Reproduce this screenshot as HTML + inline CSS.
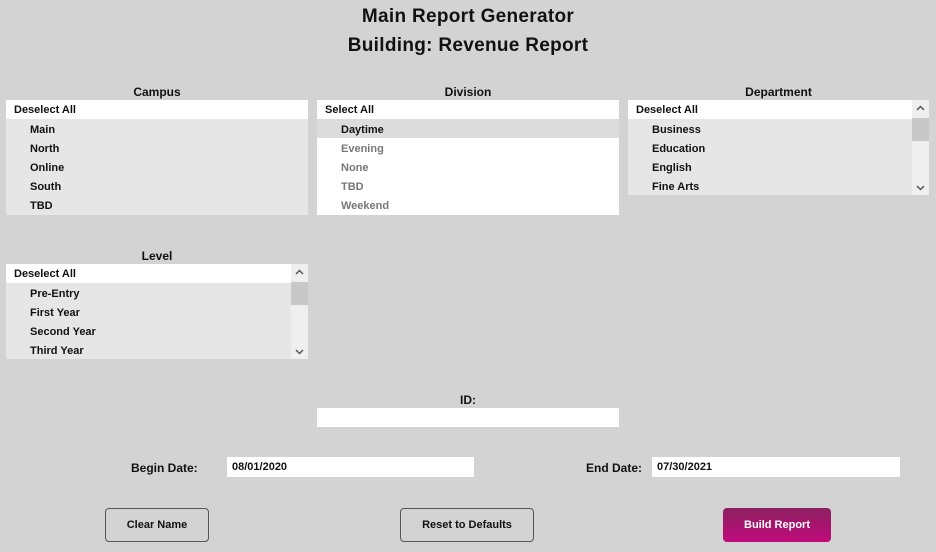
<!DOCTYPE html>
<html><head><style>
*{box-sizing:border-box;margin:0;padding:0}
body{width:936px;height:552px;background:#d3d3d3;font-family:"Liberation Sans",sans-serif;font-weight:bold;color:#111;position:relative;overflow:hidden;font-size:11px}
.a{position:absolute}
.t{position:absolute;left:0;width:936px;text-align:center;font-size:19px;letter-spacing:0.3px}
.lbl{position:absolute;text-align:center;font-size:12px}
.box{position:absolute;background:#e6e6e6}
.hd{height:19px;background:#fff;line-height:21px;padding-left:8px}
.r{height:19px;line-height:22px;padding-left:24px}
.g{color:#777}
.sel{background:#dcdcdc}
.sb{position:absolute;right:0;top:0;width:17px;height:100%;background:#efefef}
.th{position:absolute;left:0;width:17px;background:#c8c8c8}
.inp{position:absolute;background:#fff;height:20px;line-height:21px;padding-left:5px;font-weight:bold;font-size:11px}
.btn{position:absolute;border:1px solid #555;border-radius:4px;background:#d3d3d3;text-align:center;font-size:11px}
</style></head><body>
<div class="t" style="top:6px">Main Report Generator</div>
<div class="t" style="top:35px">Building: Revenue Report</div>

<div class="lbl" style="left:6px;width:302px;top:85px">Campus</div>
<div class="box" style="left:6px;top:100px;width:302px;height:115px">
<div class="hd">Deselect All</div><div class="r">Main</div><div class="r">North</div><div class="r">Online</div><div class="r">South</div><div class="r">TBD</div></div>

<div class="lbl" style="left:317px;width:302px;top:85px">Division</div>
<div class="box" style="left:317px;top:100px;width:302px;height:115px;background:#fff">
<div class="hd">Select All</div><div class="r sel">Daytime</div><div class="r g">Evening</div><div class="r g">None</div><div class="r g">TBD</div><div class="r g">Weekend</div></div>

<div class="lbl" style="left:628px;width:301px;top:85px">Department</div>
<div class="box" style="left:628px;top:100px;width:301px;height:95px;overflow:hidden">
<div class="hd">Deselect All</div><div class="r">Business</div><div class="r">Education</div><div class="r">English</div><div class="r">Fine Arts</div>
<div class="sb"><div class="th" style="top:18px;height:23px"></div>
<svg class="a" style="left:4px;top:5px" width="9" height="7"><path d="M1 5L4.5 1.5L8 5" stroke="#555" stroke-width="1.5" fill="none"/></svg>
<svg class="a" style="left:4px;top:84px" width="9" height="7"><path d="M1 2L4.5 5.5L8 2" stroke="#555" stroke-width="1.5" fill="none"/></svg></div></div>

<div class="lbl" style="left:6px;width:302px;top:249px">Level</div>
<div class="box" style="left:6px;top:264px;width:302px;height:95px;overflow:hidden">
<div class="hd">Deselect All</div><div class="r">Pre-Entry</div><div class="r">First Year</div><div class="r">Second Year</div><div class="r">Third Year</div>
<div class="sb"><div class="th" style="top:18px;height:23px"></div>
<svg class="a" style="left:4px;top:5px" width="9" height="7"><path d="M1 5L4.5 1.5L8 5" stroke="#555" stroke-width="1.5" fill="none"/></svg>
<svg class="a" style="left:4px;top:84px" width="9" height="7"><path d="M1 2L4.5 5.5L8 2" stroke="#555" stroke-width="1.5" fill="none"/></svg></div></div>

<div class="lbl" style="left:317px;width:302px;top:393px">ID:</div>
<div class="inp" style="left:317px;top:408px;width:302px;height:19px"></div>

<div class="a" style="left:131px;top:461px;font-size:12px">Begin Date:</div>
<div class="inp" style="left:227px;top:457px;width:247px">08/01/2020</div>
<div class="a" style="left:586px;top:461px;font-size:12px">End Date:</div>
<div class="inp" style="left:652px;top:457px;width:248px">07/30/2021</div>

<div class="btn" style="left:105px;top:508px;width:104px;height:34px;line-height:33px">Clear Name</div>
<div class="btn" style="left:400px;top:508px;width:134px;height:34px;line-height:33px">Reset to Defaults</div>
<div class="btn" style="left:723px;top:508px;width:108px;height:34px;line-height:34px;border:none;color:#fff;background:linear-gradient(#8c2060,#c00a7c)">Build Report</div>
</body></html>
